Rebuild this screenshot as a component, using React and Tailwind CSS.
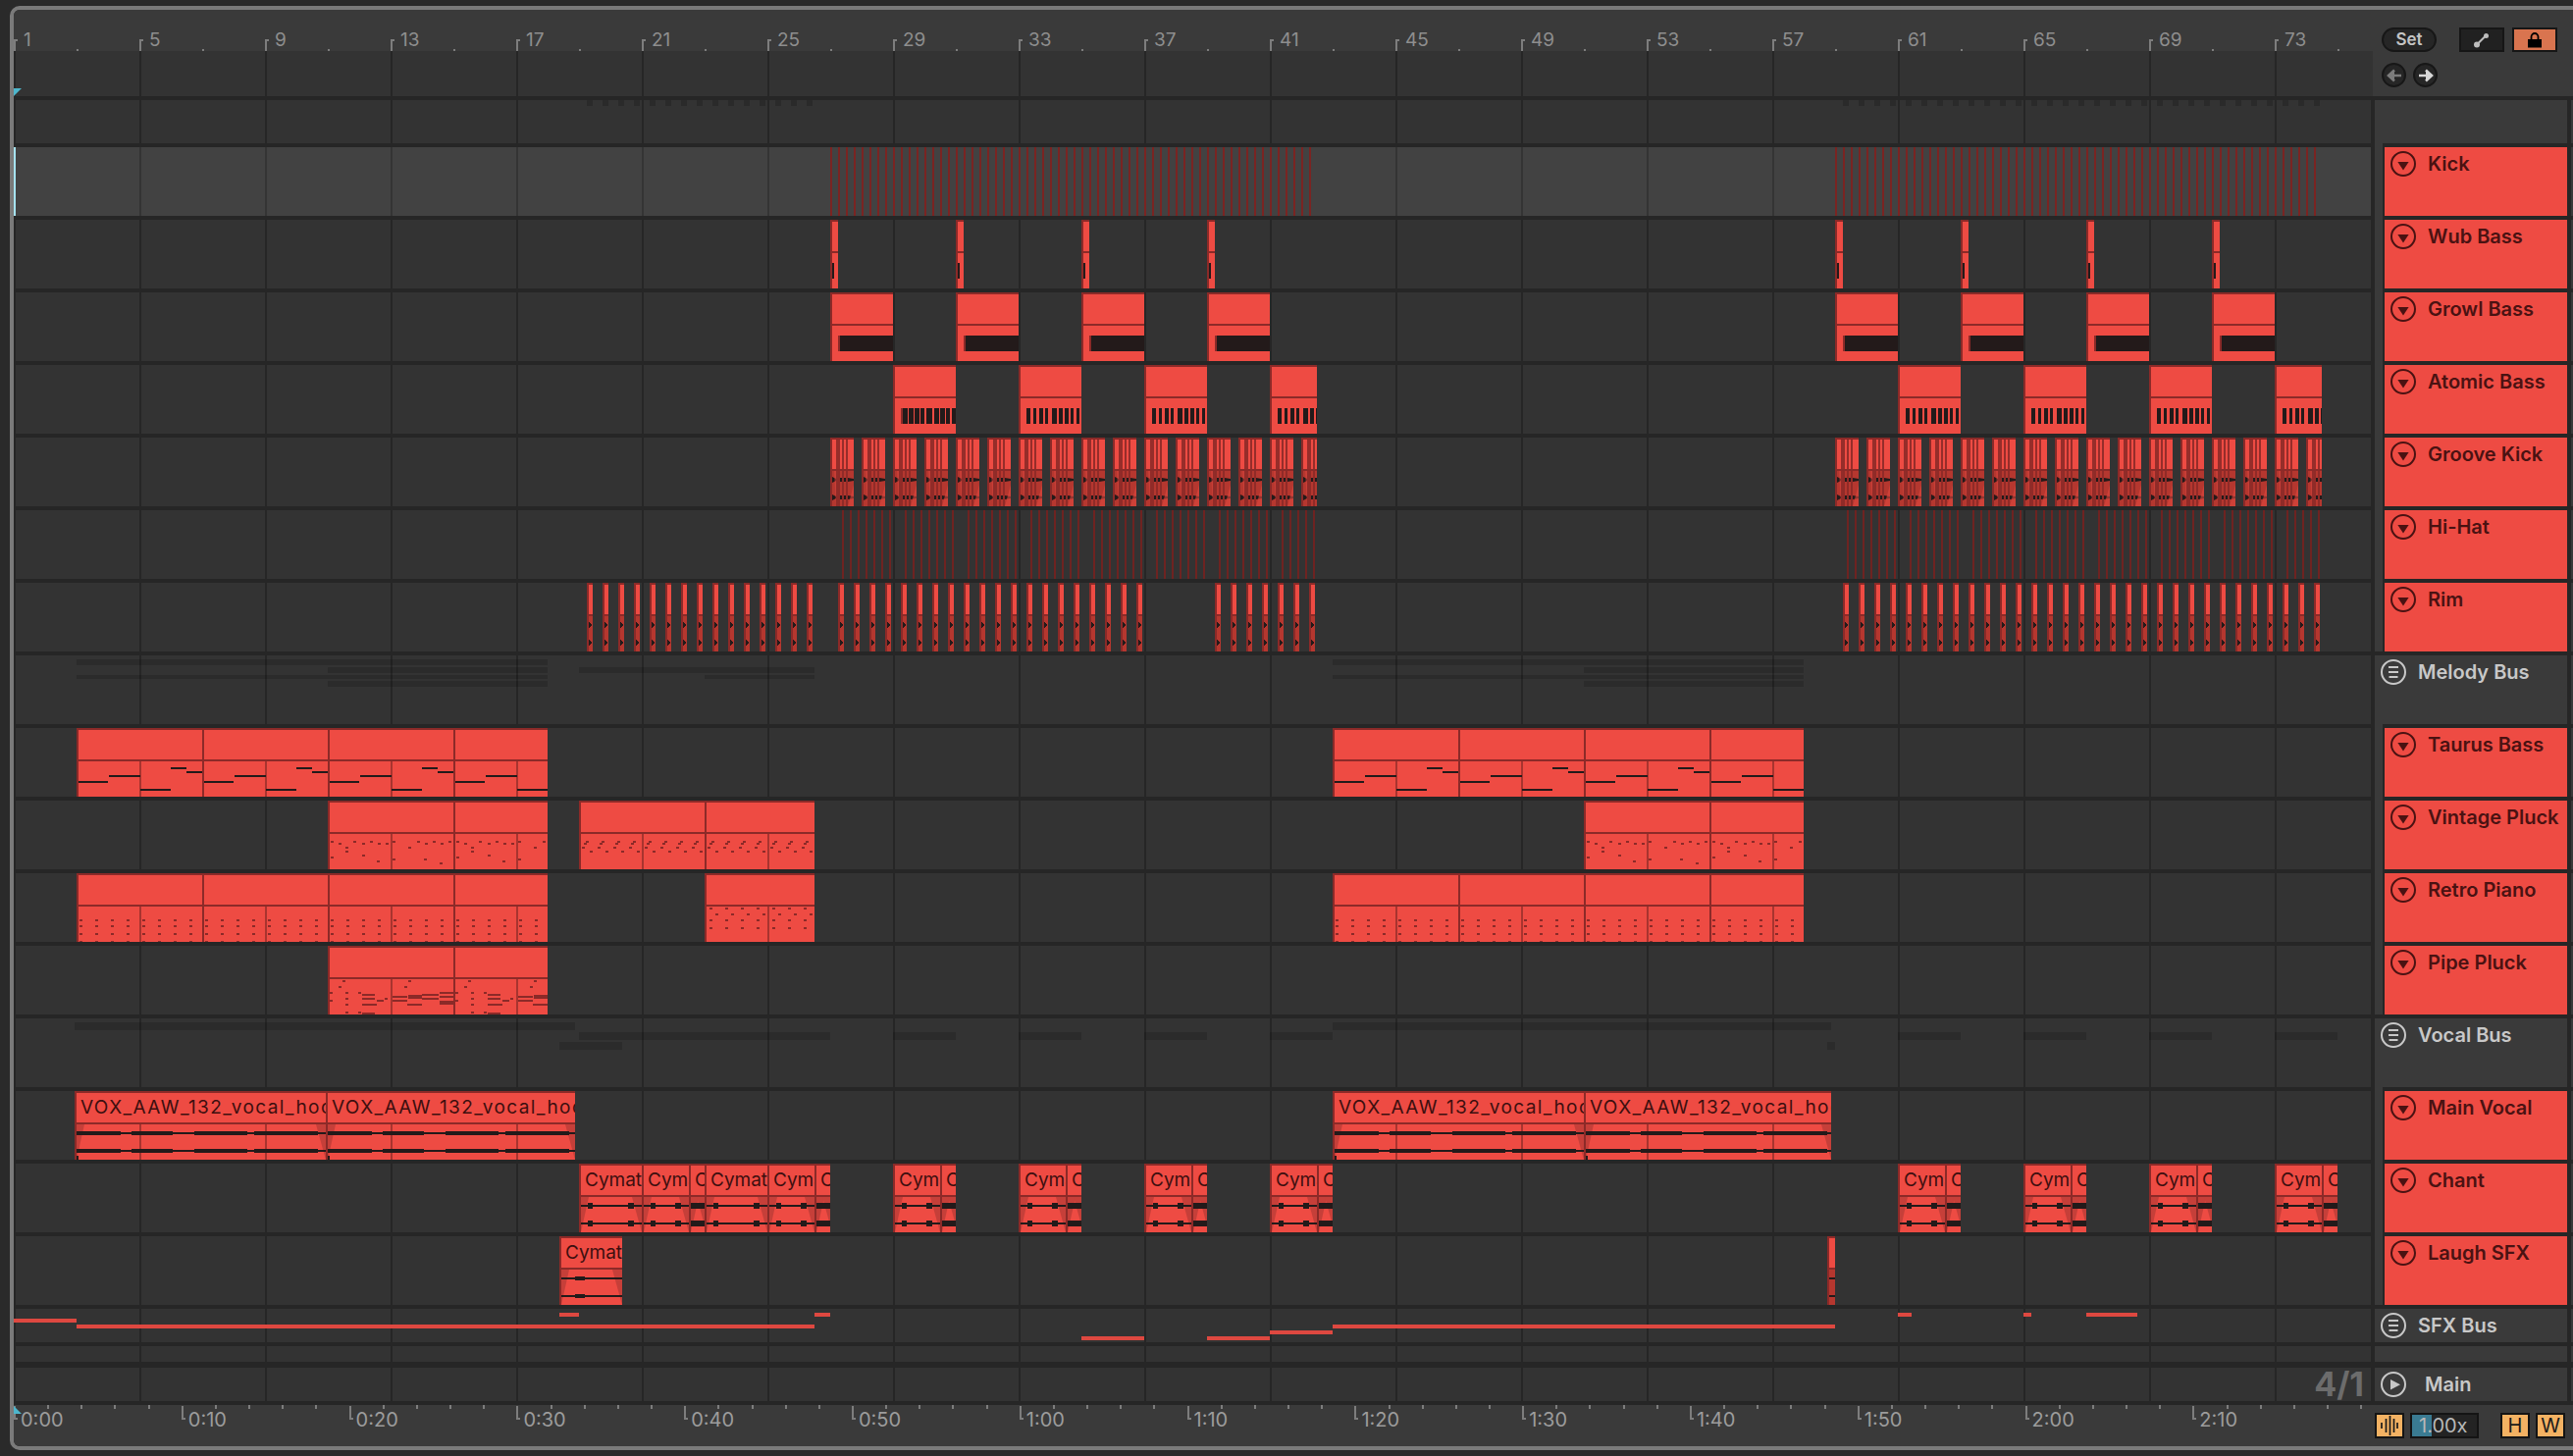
import React from "react";

const RED = "#ee4b43";
const EDGE = "#8c2a28";
const INK = "#231a1a";
const range = (n) => Array.from({ length: n }, (_, i) => i);

const Sep = ({ inset, className = "h-1" }) => (
  <div className={`flex bg-[#262626] ${className}`}>
    {inset && <div className="ml-[2406px] w-2 bg-[#3a3a3a]" />}
  </div>
);

const Lane = ({ children }) => (
  <div className="relative h-full w-[2402px] overflow-hidden bg-[#333333] bg-[repeating-linear-gradient(90deg,#262626_0px,#262626_2px,transparent_2px,transparent_128px)]">
    {children}
  </div>
);

const HotLane = ({ children }) => (
  <div className="relative h-full w-[2402px] overflow-hidden bg-[#424242] bg-[repeating-linear-gradient(90deg,#343434_0px,#343434_2px,transparent_2px,transparent_128px)]">
    {children}
  </div>
);

const Row = ({ h, lane, head }) => (
  <div className={`flex ${h}`}>
    {lane}
    <div className="w-1 bg-[#262626]" />
    <div className="w-[196px] bg-[#3a3a3a]">{head}</div>
    <div className="w-1 bg-[#262626]" />
    <div className="flex-1 bg-[#3a3a3a]" />
  </div>
);

const Clip = ({ x, w, name, tint, lines, children, wide }) => {
  const inner = w - 2;
  const grids = [];
  for (let k = 0; k < 20; k++) {
    const g = 14 + 128 * k;
    if (g > x + 2 && g < x + w - 1) grids.push(g - x - 2);
  }
  return (
    <div
      className="absolute top-0 flex h-[70px] flex-col overflow-hidden bg-[#8c2a28] pl-[2px] pt-[2px]"
      style={{ left: x - 14, width: w }}
    >
      <div
        className={`h-[30px] overflow-hidden whitespace-nowrap bg-[#ee4b43] pl-[4px] font-['Inter',sans-serif] text-[19px] leading-[30px] text-[#3d0f0f] ${
          wide ? "tracking-[1.4px]" : ""
        }`}
      >
        {name}
      </div>
      <div className="h-[2px] shrink-0" />
      <svg width={inner} height={36} className="block shrink-0" shapeRendering="crispEdges">
        <rect x="0" y="0" width={inner} height="36" fill={tint || RED} />
        {grids.map((g) => (
          <rect key={g} x={g} y="0" width="2" height="36" fill="#a8342f" />
        ))}
        {children}
      </svg>
      {lines &&
        lines.map(([o, lw]) => (
          <div
            key={o}
            className="absolute bottom-0 top-0 bg-[#8c2a28] opacity-90"
            style={{ left: o, width: lw }}
          />
        ))}
    </div>
  );
};

/* ---------- clip contents ---------- */
const Rects = ({ items, fill = INK }) =>
  items.map(([x, y, w, h], i) => <rect key={i} x={x} y={y} width={w} height={h} fill={fill} />);

const rims = (start, n) => range(n).map((i) => start + 16 * i);
const rimA = rims(598, 15);
const rimB = [...rims(854, 20), ...rims(1238, 7)];
const rimC = rims(1878, 31);

const grooveStarts = (s) => range(16).map((i) => s + 32 * i);

const GrooveBody = () => (
  <g shapeRendering="auto">
    {[9, 27].map((y) => (
      <g key={y} fill={INK}>
        <polygon points={`0,${y - 3} 4,${y - 1} 4,${y + 1} 0,${y + 3}`} />
        <rect x="8" y={y - 2} width="2" height="4" />
        <rect x="12" y={y - 2} width="2" height="4" />
        <polygon points={`16,${y - 2} 22,${y - 1} 22,${y + 1} 16,${y + 2}`} />
      </g>
    ))}
    <polygon points="2,0 6,0 4,36" fill="#d8453e" opacity="0.55" />
    <polygon points="16,36 22,14 22,36" fill="#e0483f" opacity="0.6" />
  </g>
);

const Fades = ({ w }) => (
  <g shapeRendering="auto">
    <polygon points="0,0 8,0 0,36" fill="#c63f39" />
    <polygon points={`${w},0 ${w - 10},0 ${w},36`} fill="#c63f39" />
  </g>
);

const VocalBody = ({ w }) => {
  const blobs = [
    [0, 45],
    [56, 42],
    [120, 54],
    [181, 65],
  ];
  return (
    <>
      <Fades w={w} />
      {[9, 27].map((y) => (
        <g key={y}>
          <rect x="0" y={y - 1} width={w} height="2" fill={INK} />
          {blobs.map(([a, l]) => (
            <g key={a}>
              <rect x={a} y={y - 2} width={l} height="4" fill={INK} />
            </g>
          ))}
        </g>
      ))}
      <rect x="0" y="32" width="2" height="4" fill={INK} />
    </>
  );
};

const CymBody = ({ w, kind }) => (
  <>
    <Fades w={kind === "c" ? w + 2 : w} />
    {[9, 27].map((y) => (
      <g key={y}>
        <rect x="0" y={y - 1} width={w} height="2" fill={INK} />
        {kind === "c" ? (
          <rect x="0" y={y - 3} width={14} height="6" fill={INK} />
        ) : kind === "laugh" ? (
          <rect x={14} y={y - 2} width="10" height="4" fill={INK} />
        ) : (
          <>
            <rect x="7" y={y - 3} width="5" height="6" fill={INK} />
            <rect x={w - 14} y={y - 3} width="6" height="6" fill={INK} />
          </>
        )}
      </g>
    ))}
  </>
);

const taurusNotes = [
  [0, 20, 30, 2],
  [31, 14, 32, 2],
  [63, 28, 31, 2],
  [94, 6, 16, 2],
  [110, 10, 16, 2],
];

const vp1 = [
  [1, 7], [9, 9], [24, 7], [33, 9], [41, 7], [49, 9], [57, 9], [16, 13], [16, 17], [1, 23], [33, 21], [48, 27],
  [64, 7], [80, 13], [89, 7], [97, 9], [105, 7], [113, 9], [121, 7], [96, 25], [112, 29], [64, 25],
];
const vp2 = range(8).flatMap((i) => [
  [5 + 16 * i, 7],
  [3 + 16 * i, 9],
  [1 + 16 * i, 13],
  [9 + 16 * i, 17],
]);
const rp1 = range(8).flatMap((i) => [13, 19, 27, 35].map((y) => [1 + 16 * i, y]));
const rp2 = range(8).flatMap((i) =>
  [1, 13, 21].flatMap((y) => [[3 + 16 * i, y]]).concat([[9 + 16 * i, 7]])
);

const pipeDots = [
  [13, 1], [9, 7], [0, 13], [16, 13], [29, 13], [16, 19], [0, 21], [16, 25], [16, 33], [29, 33], [56, 19],
  [80, 1], [76, 7], [128, 13],
];
const pipeBars = [
  [33, 15, 13, 2], [33, 19, 13, 2], [48, 21, 7, 2], [33, 25, 15, 2], [33, 34, 13, 2],
  [64, 17, 15, 2], [64, 21, 15, 2], [80, 16, 14, 4], [94, 15, 17, 2], [94, 19, 17, 2], [79, 25, 15, 2],
  [112, 13, 16, 2], [112, 17, 16, 2], [112, 22, 16, 4],
];

const Dots = ({ list }) =>
  list.map(([x, y], i) => <rect key={i} x={x} y={y} width="3" height="2" fill={EDGE} />);

const Segmented = ({ x, end, kind }) => {
  const out = [];
  for (let s = x, i = 0; s < end; s += 128, i++) {
    const w = Math.min(128, end - s);
    out.push(
      <Clip key={s} x={s} w={w}>
        {kind === "taurus" && <Rects items={taurusNotes} fill="#231a1a" />}
        {kind === "vp1" && <Dots list={vp1} />}
        {kind === "vp2" && <Dots list={vp2} />}
        {kind === "rp1" && <Dots list={rp1} />}
        {kind === "rp2" && <Dots list={rp2} />}
        {kind === "pipe" && (
          <>
            <Dots list={pipeDots} />
            <Rects items={pipeBars} fill={EDGE} />
          </>
        )}
      </Clip>
    );
  }
  return out;
};

const atomicA = [[10, 15], [16, 21], [22, 27], [28, 32], [34, 40], [42, 47], [48, 53], [54, 58], [60, 64]];
const atomicB = [[8, 12], [15, 18], [21, 25], [27, 30], [34, 39], [41, 45], [47, 51], [53, 56], [59, 62]];

const Wub = ({ x }) => (
  <Clip x={x} w={8}>
    <rect x="0" y="10" width="2" height="16" fill={INK} />
  </Clip>
);
const Growl = ({ x }) => (
  <Clip x={x} w={64}>
    <rect x="6" y="10" width="2" height="16" fill={EDGE} />
    <rect x="8" y="10" width="54" height="16" fill={INK} />
  </Clip>
);
const Atomic = ({ x, w, bars }) => (
  <Clip x={x} w={w}>
    <rect x="6" y="10" width="2" height="16" fill={EDGE} />
    <Rects items={bars.map(([a, b]) => [a - 2, 10, b - a, 16])} />
  </Clip>
);

const GrooveClip = ({ x, w }) => (
  <Clip x={x} w={w} tint="#b5372f" lines={[[6, 4], [12, 2], [16, 2]]}>
    <GrooveBody />
  </Clip>
);
const RimClip = ({ x }) => (
  <Clip x={x} w={6} tint="#b5372f">
    <polygon points="0,6 3,9 0,12" fill={INK} />
    <polygon points="0,24 3,27 0,30" fill={INK} />
  </Clip>
);

const Vocal = ({ x, w }) => (
  <Clip x={x} w={w} name="VOX_AAW_132_vocal_hook" wide>
    <VocalBody w={w - 2} />
  </Clip>
);
const Cym = ({ x, w, name, kind }) => (
  <Clip x={x} w={w} name={name}>
    <CymBody w={w - 2} kind={kind} />
  </Clip>
);

const chantPair = (x) => (
  <React.Fragment key={x}>
    <Cym x={x} w={48} name="Cymatics" />
    <Cym x={x + 48} w={16} name="Cymatics" kind="c" />
  </React.Fragment>
);

const Over = ({ x, end, top, h }) => (
  <div
    className="absolute bg-black/15"
    style={{ left: x - 14, width: end - x, top, height: h }}
  />
);
const Auto = ({ x, end, y }) => (
  <div
    className="absolute h-1 bg-[#de4840]"
    style={{ left: x - 14, width: end - x, top: y - 1334 }}
  />
);

/* ---------- head icons ---------- */
const FoldIcon = () => (
  <svg width="26" height="26" viewBox="0 0 26 26" className="shrink-0">
    <circle cx="13" cy="13" r="12" fill="none" stroke="#4a1212" strokeWidth="2" />
    <polygon points="7.4,11 18.6,11 13,19.4" fill="#4a1212" />
  </svg>
);
const BusIcon = () => (
  <svg width="26" height="26" viewBox="0 0 26 26" className="shrink-0">
    <circle cx="13" cy="13" r="12" fill="none" stroke="#c8c8c8" strokeWidth="2" />
    <path d="M8 8h10M8 13h10M8.5 18h9" stroke="#c8c8c8" strokeWidth="2" fill="none" />
  </svg>
);
const PlayIcon = () => (
  <svg width="26" height="26" viewBox="0 0 26 26" className="shrink-0">
    <circle cx="13" cy="13" r="12" fill="none" stroke="#c8c8c8" strokeWidth="2" />
    <polygon points="10,8 20,13.2 10,18.4" fill="#c8c8c8" />
  </svg>
);

const TrackHead = ({ name }) => (
  <div className="ml-2 flex h-full items-start border-l-2 border-[#262626] bg-[#ee4b43] pl-[6px] pt-1">
    <FoldIcon />
    <span className="ml-3 font-['Inter',sans-serif] text-[20px] font-semibold leading-[26px] text-[#4a1212]">
      {name}
    </span>
  </div>
);
const BusHead = ({ name, play }) => (
  <div className="flex h-[34px] items-center pl-[6px]">
    {play ? <PlayIcon /> : <BusIcon />}
    <span
      className={`font-['Inter',sans-serif] text-[20px] font-semibold text-[#c8c8c8] ${
        play ? "ml-[19px]" : "ml-3"
      }`}
    >
      {name}
    </span>
  </div>
);

const Track = ({ name, children, hot }) => (
  <Row h="h-[70px]" lane={hot ? <HotLane>{children}</HotLane> : <Lane>{children}</Lane>} head={<TrackHead name={name} />} />
);
const Bus = ({ name, children }) => (
  <Row h="h-[70px]" lane={<Lane>{children}</Lane>} head={<BusHead name={name} />} />
);

/* ---------- rulers ---------- */
const barNums = range(19).map((i) => 1 + 4 * i);
const TopRuler = () => (
  <div className="flex h-[42px] overflow-hidden bg-[#3a3a3a]">
    {barNums.map((n) => (
      <div key={n} className="flex w-32 shrink-0">
        <div className="flex w-16">
          <div className="mt-[30px] h-3 w-1 border-l-2 border-t-2 border-[#7d7d7d]" />
          <span className="ml-[6px] mt-[20px] font-['Inter',sans-serif] text-[19px] leading-[22px] text-[#8e8e8e]">
            {n}
          </span>
        </div>
        <div className="mt-10 h-[2px] w-[2px] bg-[#7d7d7d]" />
      </div>
    ))}
  </div>
);

const times = ["0:00", "0:10", "0:20", "0:30", "0:40", "0:50", "1:00", "1:10", "1:20", "1:30", "1:40", "1:50", "2:00", "2:10"];
const Minor = () => (
  <div className="w-[34.16px] shrink-0">
    <div className="h-1 w-[2px] bg-[#7d7d7d]" />
  </div>
);
const BottomRuler = () => (
  <div className="relative flex h-[42px] w-[2406px] overflow-hidden bg-[#3a3a3a]">
    {times.map((t) => (
      <div key={t} className="flex w-[170.8px] shrink-0">
        <div className="w-[34.16px] shrink-0">
          <div className="flex">
            <div className="mt-[1px] h-[14px] w-1 shrink-0 border-b-2 border-l-2 border-[#7d7d7d]" />
            <span className="ml-[3px] mt-[4px] whitespace-nowrap font-['Inter',sans-serif] text-[20px] leading-[22px] text-[#9c9c9c]">
              {t}
            </span>
          </div>
        </div>
        <Minor />
        <Minor />
        <Minor />
        <Minor />
      </div>
    ))}
    <Minor />
    <svg width="8" height="8" className="absolute left-0 top-[1px]">
      <polygon points="0,0 8,8 0,8" fill="#4db6cc" />
    </svg>
  </div>
);

const TopControls = () => (
  <div className="flex-1 bg-[#3a3a3a] pl-[9px] pt-[18px]">
    <div className="flex items-center">
      <div className="flex h-[25px] w-[56px] items-center justify-center rounded-full border-2 border-[#171717] bg-[#262626] font-['Inter',sans-serif] text-[17px] font-semibold text-[#c4c4c4]">
        Set
      </div>
      <div className="ml-[23px] flex h-[25px] w-[46px] items-center justify-center border-2 border-[#161616] bg-[#212121]">
        <svg width="18" height="16" viewBox="0 0 18 16">
          <path d="M4.5 12 L12.5 4" stroke="#bdbdbd" strokeWidth="2" />
          <circle cx="4" cy="12.5" r="3" fill="#bdbdbd" />
          <circle cx="13.5" cy="3.5" r="2.5" fill="#bdbdbd" />
        </svg>
      </div>
      <div className="ml-2 flex h-[25px] w-[46px] items-center justify-center border-2 border-[#161616] bg-[#d9744f]">
        <svg width="16" height="16" viewBox="0 0 16 16">
          <path d="M4.500 8V4.500a3.500 3.500 0 0 1 7 0V8" fill="none" stroke="#000" strokeWidth="1.8" />
          <rect x="1" y="7" width="14" height="8.500" fill="#000" />
        </svg>
      </div>
    </div>
    <div className="mt-[11px] flex gap-[7px]">
      <div className="flex h-[25px] w-[25px] items-center justify-center rounded-full border-2 border-[#171717] bg-[#262626]">
        <svg width="16" height="14" viewBox="0 0 16 14">
          <path d="M15 7H5M8 1.500L2 7l6 5.500" fill="#7c7c7c" stroke="#7c7c7c" strokeWidth="2.6" />
        </svg>
      </div>
      <div className="flex h-[25px] w-[25px] items-center justify-center rounded-full border-2 border-[#171717] bg-[#262626]">
        <svg width="16" height="14" viewBox="0 0 16 14">
          <path d="M1 7h10M8 1.500L14 7l-6 5.500" fill="#d6d6d6" stroke="#d6d6d6" strokeWidth="2.6" />
        </svg>
      </div>
    </div>
  </div>
);

const KeyBox = ({ children }) => (
  <div className="flex h-[26px] w-[30px] items-center justify-center border-2 border-[#141414] bg-[#f3b263] font-['Inter',sans-serif] text-[20px] leading-none text-[#1a1a1a]">
    {children}
  </div>
);

const BottomControls = () => (
  <div className="flex flex-1 items-start bg-[#3a3a3a] pt-2">
    <KeyBox>
      <svg width="20" height="20" viewBox="0 0 20 20">
        <path d="M2 7v6M6.500 3v14M10.500 0v20M14.500 3v14M18 7v6" stroke="#1a1a1a" strokeWidth="1.7" />
      </svg>
    </KeyBox>
    <div className="relative ml-[6px] flex h-[26px] w-[70px] items-center border-2 border-[#141414] bg-[#232323] pl-[7px] font-['Inter',sans-serif] text-[20px] leading-none text-[#b8b8b8]">
      <div className="absolute bottom-0 left-0 top-0 w-5 bg-[#3a7b92]" />
      <span className="relative">1.00x</span>
    </div>
    <div className="ml-[22px]">
      <KeyBox>H</KeyBox>
    </div>
    <div className="ml-[6px]">
      <KeyBox>W</KeyBox>
    </div>
  </div>
);

/* ---------- page ---------- */
export default function App() {
  return (
    <div className="h-[1484px] w-[2622px] overflow-hidden bg-[#2a2a2a] pl-[10px] pt-[6px]">
      <div className="h-[1472px] w-[2626px] overflow-hidden rounded-l-[10px] rounded-tr-none border-4 border-[#7a7a7a]">
        {/* top */}
        <div className="flex h-[88px]">
          <div className="w-[2404px]">
            <TopRuler />
            <div className="relative h-[46px] bg-[#333333] bg-[repeating-linear-gradient(90deg,#262626_0px,#262626_2px,transparent_2px,transparent_128px)]">
              <svg width="8" height="8" className="absolute bottom-0 left-0">
                <polygon points="0,8 0,0 8,0" fill="#4db6cc" />
              </svg>
            </div>
          </div>
          <TopControls />
        </div>
        <Sep />
        <Row
          h="h-[44px]"
          lane={
            <Lane>
              {[...rimA, ...rimC].map((x) => (
                <div key={x} className="absolute top-0 h-[6px] w-[6px] bg-[#2a2a2a]" style={{ left: x - 14 }} />
              ))}
            </Lane>
          }
        />
        <Sep inset />

        <Track name="Kick" hot>
          <div className="absolute bottom-0 left-0 top-0 w-[2px] bg-[#a6e3ef]" />
          {[...range(62).map((i) => 846 + 8 * i), ...range(62).map((i) => 1870 + 8 * i)].map((x) => (
            <div key={x} className="absolute bottom-0 top-0 w-[2px] bg-[#7a2422]" style={{ left: x - 14 }} />
          ))}
        </Track>
        <Sep inset />
        <Track name="Wub Bass">
          {[846, 974, 1102, 1230, 1870, 1998, 2126, 2254].map((x) => (
            <Wub key={x} x={x} />
          ))}
        </Track>
        <Sep inset />
        <Track name="Growl Bass">
          {[846, 974, 1102, 1230, 1870, 1998, 2126, 2254].map((x) => (
            <Growl key={x} x={x} />
          ))}
        </Track>
        <Sep inset />
        <Track name="Atomic Bass">
          <Atomic x={910} w={64} bars={atomicA} />
          <Atomic x={1038} w={64} bars={atomicB} />
          <Atomic x={1166} w={64} bars={atomicB} />
          <Atomic x={1294} w={48} bars={atomicB} />
          <Atomic x={1934} w={64} bars={atomicB} />
          <Atomic x={2062} w={64} bars={atomicB} />
          <Atomic x={2190} w={64} bars={atomicB} />
          <Atomic x={2318} w={48} bars={atomicB} />
        </Track>
        <Sep inset />
        <Track name="Groove Kick">
          {[...grooveStarts(846), ...grooveStarts(1870)].map((x, i) => (
            <GrooveClip key={x} x={x} w={i % 16 === 15 ? 16 : 24} />
          ))}
        </Track>
        <Sep inset />
        <Track name="Hi-Hat">
          {[858, 1882].flatMap((s) =>
            range(8).flatMap((g) =>
              range(g === 7 ? 5 : 7).map((i) => {
                const x = s + 64 * g + 8 * i;
                return <div key={x} className="absolute bottom-0 top-0 w-[2px] bg-[#6e2321]" style={{ left: x - 14 }} />;
              })
            )
          )}
        </Track>
        <Sep inset />
        <Track name="Rim">
          {[...rimA, ...rimB, ...rimC].map((x) => (
            <RimClip key={x} x={x} />
          ))}
        </Track>
        <Sep />
        <Bus name="Melody Bus">
          {[78, 1358].map((s) => (
            <React.Fragment key={s}>
              <Over x={s} end={s + 480} top={4} h={6} />
              <Over x={s} end={s + 480} top={20} h={4} />
              <Over x={s + 256} end={s + 480} top={12} h={6} />
              <Over x={s + 256} end={s + 480} top={26} h={6} />
            </React.Fragment>
          ))}
          <Over x={590} end={830} top={12} h={6} />
          <Over x={718} end={830} top={20} h={4} />
        </Bus>
        <Sep inset />
        <Track name="Taurus Bass">
          <Segmented x={78} end={558} kind="taurus" />
          <Segmented x={1358} end={1838} kind="taurus" />
        </Track>
        <Sep inset />
        <Track name="Vintage Pluck">
          <Segmented x={334} end={558} kind="vp1" />
          <Segmented x={590} end={830} kind="vp2" />
          <Segmented x={1614} end={1838} kind="vp1" />
        </Track>
        <Sep inset />
        <Track name="Retro Piano">
          <Segmented x={78} end={558} kind="rp1" />
          <Segmented x={718} end={830} kind="rp2" />
          <Segmented x={1358} end={1838} kind="rp1" />
        </Track>
        <Sep inset />
        <Track name="Pipe Pluck">
          <Segmented x={334} end={558} kind="pipe" />
        </Track>
        <Sep />
        <Bus name="Vocal Bus">
          <Over x={76} end={586} top={4} h={8} />
          <Over x={1358} end={1866} top={4} h={8} />
          <Over x={590} end={846} top={14} h={8} />
          <Over x={570} end={634} top={24} h={8} />
          <Over x={1862} end={1870} top={24} h={8} />
          {[910, 1038, 1166, 1294, 1934, 2062, 2190, 2318].map((x) => (
            <Over key={x} x={x} end={x + 64} top={14} h={8} />
          ))}
        </Bus>
        <Sep inset />
        <Track name="Main Vocal">
          <Vocal x={76} w={256} />
          <Vocal x={332} w={254} />
          <Vocal x={1358} w={256} />
          <Vocal x={1614} w={252} />
        </Track>
        <Sep inset />
        <Track name="Chant">
          <Cym x={590} w={64} name="Cymatics" />
          <Cym x={654} w={48} name="Cymatics" />
          <Cym x={702} w={16} name="Cymatics" kind="c" />
          <Cym x={718} w={64} name="Cymatics" />
          <Cym x={782} w={48} name="Cymatics" />
          <Cym x={830} w={16} name="Cymatics" kind="c" />
          {[910, 1038, 1166, 1294, 1934, 2062, 2190, 2318].map(chantPair)}
        </Track>
        <Sep inset />
        <Track name="Laugh SFX">
          <Cym x={570} w={64} name="Cymatics" kind="laugh" />
          <Clip x={1862} w={8} tint="#b5372f">
            <rect x="0" y="8" width="6" height="2" fill={INK} />
            <rect x="0" y="26" width="6" height="2" fill={INK} />
          </Clip>
        </Track>
        <Sep />
        <Row
          h="h-[34px]"
          lane={
            <Lane>
              <Auto x={14} end={78} y={1344} />
              <Auto x={78} end={830} y={1350} />
              <Auto x={570} end={590} y={1338} />
              <Auto x={830} end={846} y={1338} />
              <Auto x={1102} end={1166} y={1362} />
              <Auto x={1230} end={1294} y={1362} />
              <Auto x={1294} end={1358} y={1356} />
              <Auto x={1358} end={1870} y={1350} />
              <Auto x={1934} end={1948} y={1338} />
              <Auto x={2062} end={2070} y={1338} />
              <Auto x={2126} end={2178} y={1338} />
            </Lane>
          }
          head={<BusHead name="SFX Bus" />}
        />
        <Sep />
        <Row h="h-4" lane={<Lane />} />
        <Sep className="h-[6px]" />
        <Row
          h="h-[34px]"
          lane={
            <Lane>
              <div className="flex h-full items-center justify-end pr-[7px] font-['Inter',sans-serif] text-[34px] font-bold leading-none text-[#6c6c6c]">
                4/1
              </div>
            </Lane>
          }
          head={<BusHead name="Main" play />}
        />
        <Sep />
        <div className="flex h-[42px]">
          <BottomRuler />
          <BottomControls />
        </div>
      </div>
    </div>
  );
}
